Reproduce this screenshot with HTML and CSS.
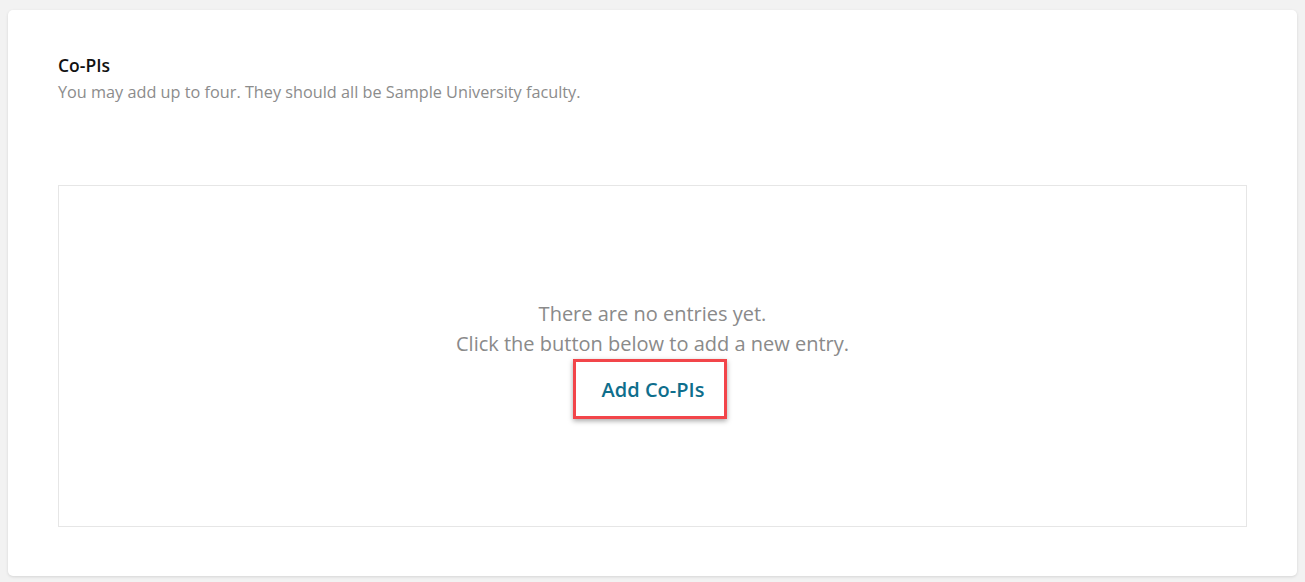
FILE: index.html
```html
<!DOCTYPE html>
<html>
<head>
<meta charset="utf-8">
<link rel="stylesheet" href="styles.css">
</head>
<body>
<div class="card">
  <div class="title">Co-PIs</div>
  <div class="subtitle">You may add up to four. They should all be Sample University faculty.</div>
  <div class="empty">
    <div class="msg">There are no entries yet.</div>
    <div class="msg">Click the button below to add a new entry.</div>
    <button class="add">Add Co-PIs</button>
  </div>
</div>
</body>
</html>
```
FILE: styles.css
```css
html, body { margin: 0; padding: 0; }
body {
  background: #f2f2f2;
  font-family: "Open Sans", "Liberation Sans", sans-serif;
  padding: 10px 8px 6px 8px;
  height: 582px;
  box-sizing: border-box;
}
.card {
  background: #fff;
  border-radius: 5px;
  box-shadow: 0 1px 3px rgba(0,0,0,0.12);
  height: 566px;
  box-sizing: border-box;
  padding: 45px 50px 49px 50px;
  display: flex;
  flex-direction: column;
}
.title {
  font-size: 17.5px;
  line-height: 21px;
  font-weight: 600;
  color: #111;
}
.subtitle {
  margin-top: 5px;
  font-size: 16.25px;
  line-height: 22px;
  color: #8c8c8c;
}
.empty {
  margin-top: 82px;
  flex: 1;
  border: 1px solid #e6e6e6;
  padding-top: 6px;
  display: flex;
  flex-direction: column;
  align-items: center;
  justify-content: center;
}
.msg {
  font-size: 20px;
  line-height: 30px;
  color: #8a8a8a;
}
.add {
  margin: 0 5px 0 0;
  width: 154px;
  height: 60px;
  background: #fff;
  border: 3px solid #f2454a;
  box-shadow: 0 2px 5px rgba(0,0,0,0.35);
  color: #0e6e8c;
  font-family: "Open Sans", "Liberation Sans", sans-serif;
  font-size: 20px;
  font-weight: 600;
  padding: 0 0 0 6px;
  cursor: pointer;
}
```
